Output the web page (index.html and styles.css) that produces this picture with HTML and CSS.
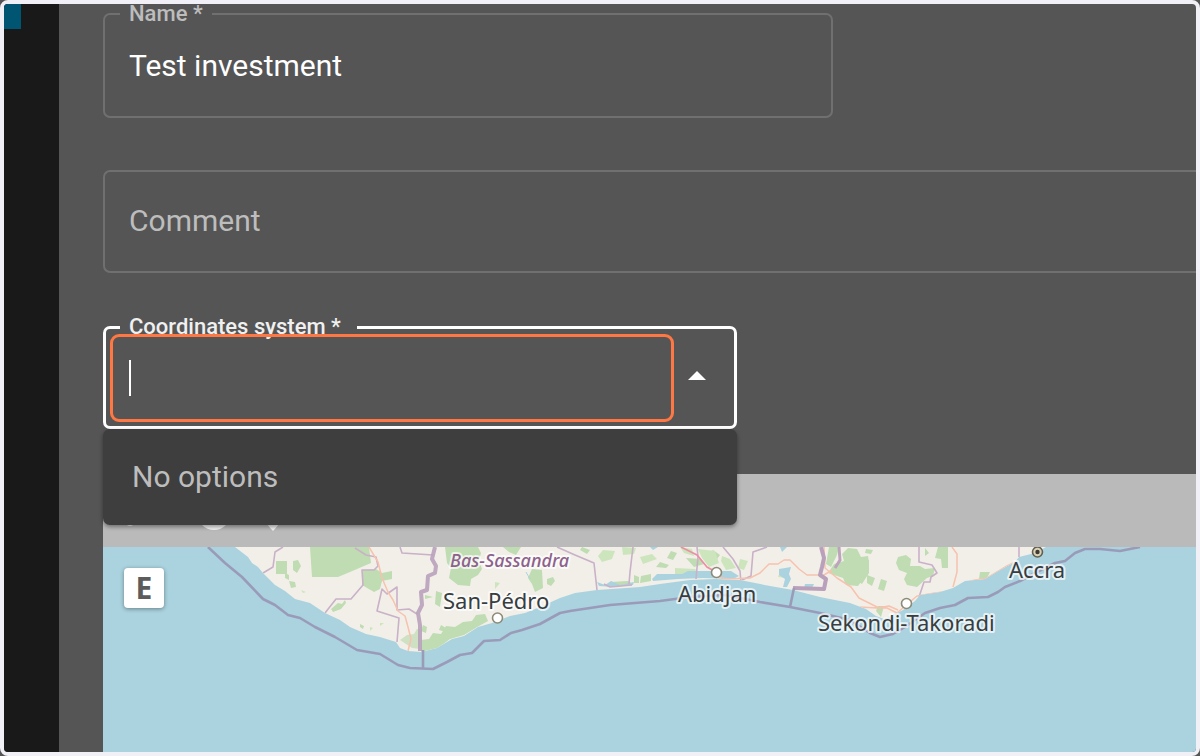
FILE: index.html
```
<!DOCTYPE html>
<html lang="en">
<head>
<meta charset="utf-8">
<title>Investment</title>
<link rel="stylesheet" href="styles.css">
</head>
<body>
<div class="frame">
  <aside class="sidebar"><div class="sidebar-mark"></div></aside>
  <main class="main">
    <form class="form">
      <fieldset class="field field-name">
        <legend class="field-legend"><label for="name">Name *</label></legend>
        <input class="field-input" id="name" type="text" value="Test investment">
      </fieldset>
      <div class="field field-comment">
        <input class="field-input" id="comment" type="text" placeholder="Comment" aria-label="Comment">
      </div>
      <div class="combo">
        <fieldset class="field field-active">
          <legend class="field-legend"><label for="coords">Coordinates system *</label></legend>
          <div class="combo-row">
            <input class="field-input" id="coords" type="text" role="combobox" aria-expanded="true" aria-controls="coords-list">
            <button class="combo-toggle" type="button" aria-label="Close">
              <svg width="18" height="9" viewBox="0 0 18 9"><path d="M0 9 9 0l9 9z" fill="#fff"/></svg>
            </button>
          </div>
        </fieldset>
        <span class="caret"></span>
        <span class="highlight"></span>
        <div class="combo-menu" id="coords-list">No options</div>
      </div>
    </form>
    <section class="map-panel">
      <div class="toolbar">
        <button class="tool" type="button" aria-label="Draw line"><svg width="60" height="40" viewBox="0 0 60 40"><path d="M6 33 54 6" stroke="#f4f4f4" stroke-width="4"/><circle cx="7" cy="31" r="4" fill="#f4f4f4"/></svg></button>
        <button class="tool" type="button" aria-label="Draw circle"><svg width="60" height="40" viewBox="0 0 60 40"><circle cx="31" cy="22" r="17" fill="#f4f4f4"/></svg></button>
        <button class="tool" type="button" aria-label="Add marker"><svg width="60" height="40" viewBox="0 0 60 40"><path d="M30 40C24 34 17 24 17 15a13 13 0 0 1 26 0c0 9-7 19-13 25z" fill="#f4f4f4"/></svg></button>
      </div>
      <div class="map">
        <svg class="map-canvas" viewBox="103 547 1093 205" preserveAspectRatio="xMinYMin slice" role="img" aria-label="Map of the Gulf of Guinea coast">
          <defs>
            <clipPath id="land"><path d="M235 547L248 557 252 563 258 567 263 573 275 585 285 591 295 599 310 603 325 613 340 620 350 627 366 634 380 637 396 642 400 648 408 651 421 652 437 648 452 639 464 636 478 627 492 623 510 616 525 613 540 607 560 598 575 593 597 590 640 587 660 584 690 580 715 579 740 580 770 586 793 590 820 597 850 603 866 609 876 616 884 619 893 615 903 610 915 601 920 595 940 592 953 588 965 581 985 579 1000 570 1015 562 1019 557 1035 553 1046 547Z"/></clipPath>
          </defs>
          <g clip-path="url(#land)">
            <rect x="103" y="547" width="1093" height="120" fill="#f2efe9"/>
            <g fill="#bfdcb2">
              <path d="M310 547H369L371 563 350 572 338 577H312ZM276 561h11v13H276ZM293 561l5-1 3 6-4 7-4-3ZM285 573l4 2v5l-4-2ZM289 581l6 1 1 5-5 1ZM363 570l13-1 6 4 10-2v8l-10 2-2 8-6 3-12-7ZM331 609l7-6 4 1 3-4 1 3-5 6-8 3ZM360 624l4 2-1 3-3-2ZM436 591l6 2-2 14-5-3ZM433 597l-8 2v-4ZM445 547h33l3 6-2 8 3 8-4 6-7 4-1 7-12-1-9-7 2-10-4-5ZM532 569l10 1 1 18-8 4-3-8-4-6ZM547 579l6-2 2 4-4 5-4-2ZM503 547h18l-5 8-7-3ZM582 547l8 3-3 4-7-4ZM610 582l18-1 5 3-12 2ZM641 576l10-2v7l-11 2ZM639 577l-5-2v8h5Z"/>
              <path d="M421 640l8-1 4-6 8 1 5-8 9 1 8-5 9-1 4-6 9-1 3 7-9 5-15 9-14 4-12 9-17 4ZM423 625l4 2-1 6-5-2ZM446 632l-7-2 2-5 5 3ZM829 547h10l-2 8-6 12-5-3ZM848 548l9 1 4 8 7-1 1 7-7 6 1 10-5 7-12-1-3-7-15-5 6-9 10-3-2-7ZM860 561l9-1v13l-7 11-5-3ZM898 557l8-2 5 4-1 7 10 0 5 3 10-1-2 8-6 2-10 9-10-2-3-6 3-6-8-3-3-7ZM881 579l6 2-3 10-6-2ZM867 575l8 3-3 8-5-3ZM938 547h10v21l-6 0-1-9-6-1ZM925 548l4 5-4 3ZM980 572l10 0-3 6-8 1ZM884 606l-3 11-5-6 2-5ZM866 549l7 1-2 4-6-1ZM671 551l6 2-4 7-6-2ZM686 558l15 1 3 5-10 3ZM713 550l7 5-3 4-8-5ZM660 562l9 3-3 3-10-1Z"/>
              <path d="M400 640l7-5 7-1 3-5 3 0v20l-8-1Z" opacity=".7"/>
            </g>
            <g fill="#cde5bd"><path d="M603 550l12 1-3 8-10 3-4-6ZM622 547l14 1-2 6-11 1ZM640 557l12-3 5 5-14 5ZM680 547l12 2 2 7-10-3ZM722 556l8 3 6 9-10 2-5-9ZM740 559l8 2-4 9-6-2ZM780 572l9 0-3 6-8-1ZM698 549l17 2 4 12-10 4-7-9ZM675 568l20 1 7 7-27-1ZM301 590l5 2-3 1ZM370 627l3 1-3 3ZM380 623l4 0-4 3ZM495 582l5 1-5 6Z"/></g>
            <g fill="#aad3df"><path d="M652 579l5-5 25 0 6-3 27 0 16 0 8 5-6 3-30-1-25 1-25 2ZM779 569l12-2-2 7 2 5-4 8h-4l2-8-6-4ZM597 582l8 3 6-4 9 4 14-3-1 3-20 2-14-1ZM780 547l7 0-5 5ZM650 547l8 0-5 3ZM805 584l9 0-2 4-8 0Z"/></g>
            <g fill="none" stroke="#c9b1c8" stroke-width="1.600" stroke-linejoin="round">
              <path d="M263 573l10-6 2-15 8-5M325 613l11-14h15l12-14-1-15h12l4-4-2-9-10-2-11-7M397 642l2-24-22-7 5-22 5 5 10-7v23l12-1 8 5M400 547l2 6 31 2M557 547l18 8 19 8 3 27M633 547l-3 25-1 12M696 579l2-22-1-10M723 547l10 12 7 12 1 12M742 580l9-4 2-24 14-5M604 584l6 3 22-2M919 547l0 15 13 3 5 8-6 4-1 5-6 0-5 15M1019 547v10"/>
            </g>
            <path d="M526 572l4 7" stroke="#aad3df"/>
            <g fill="none" stroke="#f7c2ae" stroke-width="1.500" stroke-linejoin="round">
              <path d="M369 547l9 15 4 16 6 14 5 8 5 11 7 5 3 11 3 12-3 12M716 577l12 2 22-1 10-5 9-9h9l6-4 6 0 9 9 8 6 17 0 8-5M824 547l1 21 12 10 14 9 8 11 20 10 8 0 10 5 14-12 6-5 18-3 24-3 11-9 17-3 20-12 12-6 8-1 17-6M952 547l5 7 0 18-4 15M860 607l17 1 12-2 9 4"/>
            </g>
            <path d="M681 547l16 8 10 12 9 5" fill="none" stroke="#ed8ea4" stroke-width="1.600"/>
            <path d="M835 568l5-8-1-13" fill="none" stroke="#bca5bc" stroke-width="3"/>
          </g>
          <g fill="none" stroke="#b9a1bb" stroke-width="4" stroke-linejoin="round">
            <path d="M435 547l-3 12 4 7-1 7-7 3-1 14-6 2 1 13-4 8 2 12v26" opacity=".9"/>
            <path d="M821 547l3 11-2 9-2 8 6 4-2 10-31-1"/>
          </g>
          <g fill="none" stroke="#9a9bb9" stroke-width="2.600" stroke-linejoin="round">
            <path d="M208 547L225 563 242 577 263 599 275 605 288 615 300 618 315 627 335 637 357 650 380 654 398 665 410 668 433 669 447 662 460 655 472 653 484 641 500 640 511 633 522 630 540 624 560 613 570 611 610 605 660 601 690 597 725 595 760 602 790 607 820 613 850 620 870 633 880 637 893 634 905 627 925 613 940 608 955 605 968 598 988 597 998 592 1005 587 1020 581 1035 573 1055 563 1065 561 1075 553 1085 549 1100 549 1120 551 1140 547"/>
            <path d="M423 650v19M790 607l4-19"/>
          </g>
          <g fill="#fff" stroke="#8b8b78" stroke-width="1.600">
            <circle cx="497.500" cy="618" r="5"/>
            <circle cx="716.500" cy="572.500" r="5"/>
            <circle cx="906.500" cy="603.500" r="5"/>
            <circle cx="1037.500" cy="552" r="5" fill="#d9d2b8" stroke="#625e50"/>
          </g>
          <circle cx="1037.500" cy="552" r="2.200" fill="#3c3a32"/>
          <g class="map-labels">
            <text class="region" x="450" y="567">Bas-Sassandra</text>
            <text x="443" y="609">San-Pédro</text>
            <text x="678" y="602">Abidjan</text>
            <text x="818" y="631">Sekondi-Takoradi</text>
            <text x="1009" y="578">Accra</text>
          </g>
        </svg>
        <button class="map-control" type="button">E</button>
      </div>
    </section>
  </main>
</div>
</body>
</html>
```
FILE: styles.css
```
* {
  box-sizing: border-box;
}

body {
  margin: 0;
  background: #555;
  font-family: Roboto, "Liberation Sans", sans-serif;
  color: #fff;
}

button,
input {
  font: inherit;
  color: inherit;
  background: none;
  border: 0;
  padding: 0;
}

.frame {
  display: flex;
  min-height: 100vh;
  border: 4px solid #f2f0f7;
  border-radius: 8px;
  overflow: hidden;
  background: #555;
}

.sidebar {
  flex: none;
  width: 55px;
  background: #191919;
}

.sidebar-mark {
  width: 17px;
  height: 25px;
  background: #005672;
}

.main {
  flex: 1;
  min-width: 0;
  display: flex;
  flex-direction: column;
  padding-left: 44px;
}

.form {
  display: flex;
  flex-direction: column;
  gap: 44px;
}

.field {
  margin: 0;
  min-width: 0;
  border: 2px solid #707070;
  border-radius: 7px;
  padding: 0 15px;
}

.field-name {
  width: 67%;
  max-width: 730px;
}

.field-legend {
  height: 20px;
  padding: 0 9px;
  font-size: 22px;
  font-weight: 500;
  line-height: 20px;
  color: #bdbdbd;
}

.field-input {
  display: block;
  width: 100%;
  height: 92px;
  padding: 0 9px 10px;
  font-size: 30px;
  outline: 0;
}

.field-comment {
  margin-top: 8px;
  border-right: 0;
  border-radius: 7px 0 0 7px;
}

.field-comment .field-input {
  height: 99px;
  padding-bottom: 2px;
}

.field-input::placeholder {
  color: #bdbdbd;
  opacity: 1;
}

.combo {
  position: relative;
  width: 58%;
  max-width: 634px;
}

.field-active {
  border: 3px solid #fff;
  padding: 0 14px;
}

.field-active .field-legend {
  padding-right: 16px;
  color: #f0f0f0;
}

.combo-row {
  display: flex;
  align-items: center;
  padding-right: 13px;
}

.combo-row .field-input {
  flex: 1;
  min-width: 0;
  height: 89px;
}

.combo-toggle {
  display: grid;
  place-items: center;
  width: 20px;
  height: 40px;
  margin-bottom: 12px;
}

.highlight {
  position: absolute;
  top: 17px;
  left: 7px;
  right: 63px;
  bottom: 7px;
  border: 3px solid #ff7742;
  border-radius: 9px;
  pointer-events: none;
}

.caret {
  position: absolute;
  top: 43px;
  left: 26px;
  width: 2px;
  height: 36px;
  background: #fff;
}

.combo-menu {
  position: absolute;
  top: 100%;
  left: 0;
  right: 0;
  padding: 28px 29px;
  border-radius: 7px;
  background: #3e3e3e;
  box-shadow: 0 2px 4px rgba(0, 0, 0, 0.4);
  font-size: 30px;
  line-height: 40px;
  color: #bdbdbd;
}

.map-panel {
  flex: 1;
  display: flex;
  flex-direction: column;
  margin-top: 45px;
}

.toolbar {
  display: flex;
  align-items: center;
  height: 73px;
  padding-left: 20px;
  background: #bababa;
}

.tool,
.tool svg {
  display: block;
}

.map {
  position: relative;
  flex: 1;
  min-height: 200px;
  background: #aad3df;
}

.map-canvas {
  position: absolute;
  width: 100%;
  height: 100%;
}

.map-labels {
  font-family: "Noto Sans", sans-serif;
  font-size: 22px;
  fill: #383d40;
  stroke: rgba(255, 255, 255, 0.7);
  stroke-width: 4px;
  stroke-linejoin: round;
  paint-order: stroke;
}

.region {
  font-size: 18px;
  font-style: italic;
  font-weight: 500;
  fill: #8d618b;
}

.map-control {
  position: absolute;
  top: 21px;
  left: 21px;
  width: 40px;
  height: 40px;
  border-radius: 4px;
  background: #fff;
  box-shadow: 0 1px 4px rgba(0, 0, 0, 0.4);
  font-family: "Open Sans", sans-serif;
  font-size: 30px;
  font-weight: 700;
  line-height: 40px;
  color: #5c5c5c;
}
```
